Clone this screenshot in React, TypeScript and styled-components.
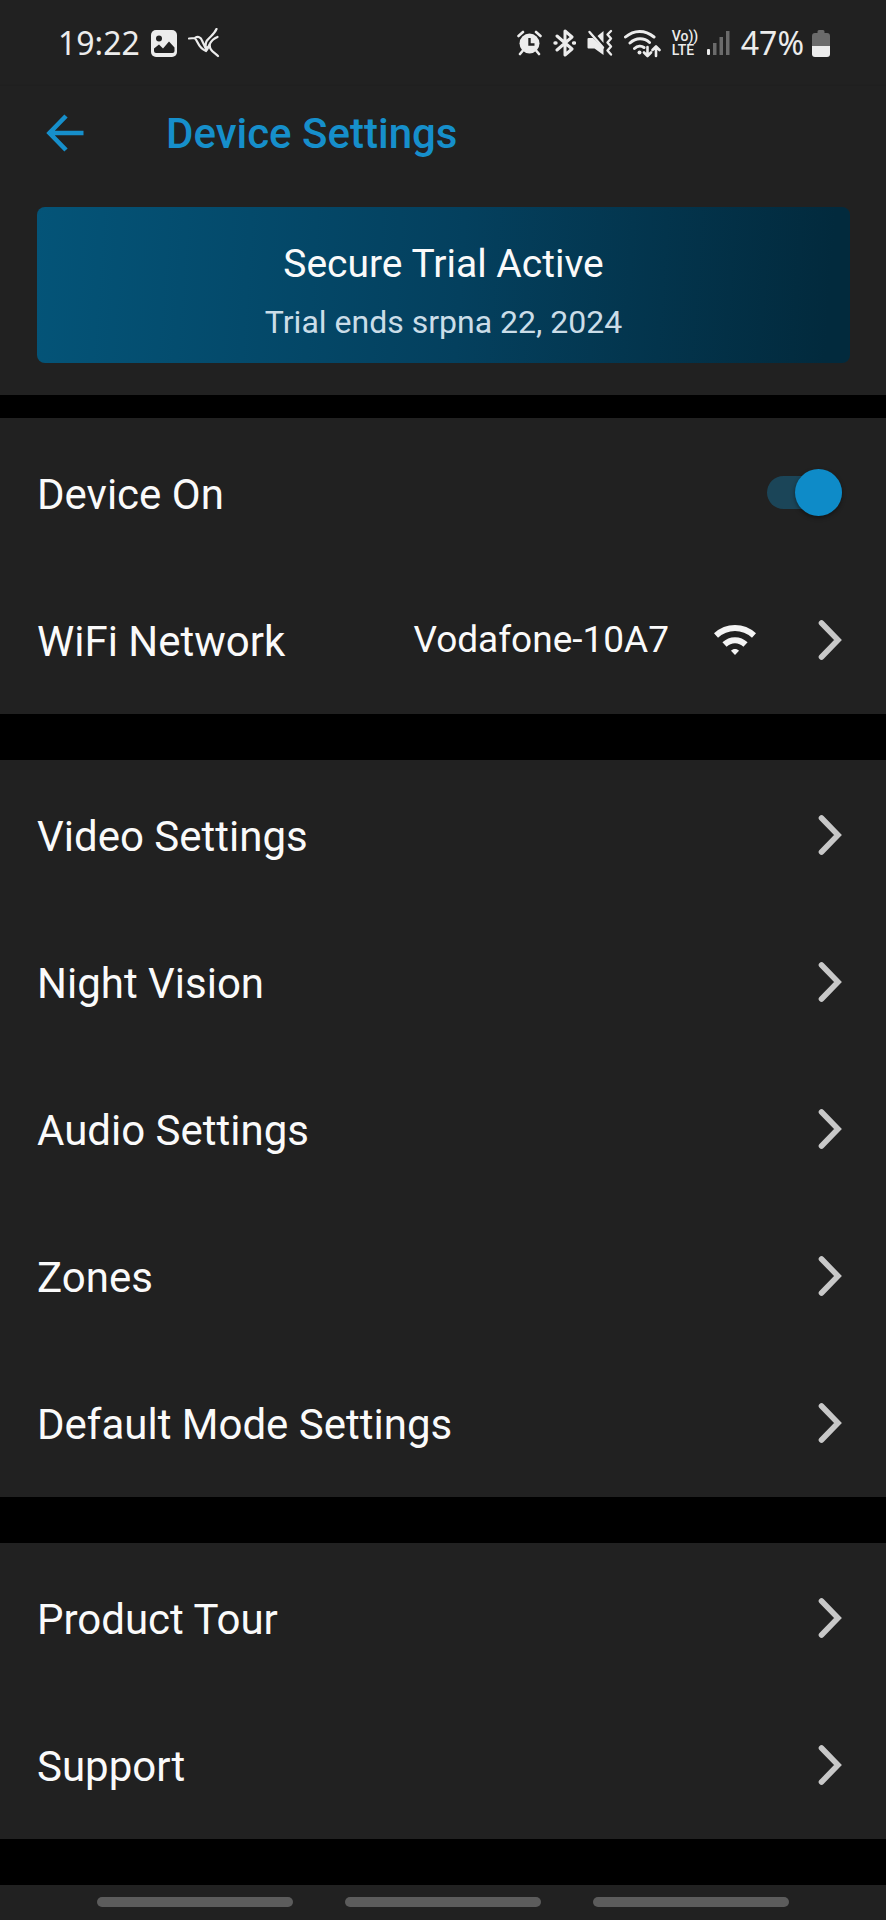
import { useState } from "react";
import styled, { createGlobalStyle } from "styled-components";

const GlobalStyle = createGlobalStyle`
  *, *::before { box-sizing: border-box; }
  body {
    margin: 0;
    background: #000;
    color: #fafafa;
    font-family: Roboto, "Noto Sans", sans-serif;
  }
  button { font: inherit; color: inherit; border: 0; padding: 0; background: none; cursor: pointer; }
  h1, h2, p { margin: 0; font-weight: 400; }
  svg { display: block; flex: none; }
`;

const Screen = styled.div`
  display: flex;
  flex-direction: column;
  min-height: 100vh;
`;

const StatusBar = styled.div`
  display: flex;
  align-items: center;
  justify-content: space-between;
  height: 86px;
  padding: 0 56px 0 58px;
  background: #212121;
  color: #ececec;
  font-family: "Noto Sans", sans-serif;
  font-size: 32px;
  line-height: 40px;
`;

const StatusGroup = styled.div<{ $gap: number }>`
  display: flex;
  align-items: center;
  gap: ${(p) => p.$gap}px;
`;

const Lte = styled.span`
  display: flex;
  flex-direction: column;
  width: 24px;
  font-family: Roboto, sans-serif;
  font-size: 14px;
  font-weight: 500;
  line-height: 14px;
`;

const Header = styled.header`
  display: flex;
  align-items: center;
  gap: 82px;
  height: 111px;
  padding: 0 36px 18px 46px;
  background: #212121;
  color: #168fcb;
  box-shadow: 0 1px 3px rgba(0, 0, 0, 0.3);
`;

const Title = styled.h1`
  padding-top: 3px;
  font-size: 42px;
  line-height: 50px;
  && { font-weight: 500; }
`;

const BannerArea = styled.section`
  padding: 10px 36px 32px 37px;
  background: #212121;
`;

const Banner = styled.div`
  display: flex;
  flex-direction: column;
  align-items: center;
  gap: 14px;
  padding: 33px 16px 21px;
  border-radius: 8px;
  background: linear-gradient(94deg, #045478 0%, #04405e 52%, #022a3d 97%);
  text-align: center;
`;

const BannerTitle = styled.h2`
  font-size: 39px;
  line-height: 48px;
`;

const BannerText = styled.p`
  font-size: 32px;
  line-height: 40px;
  color: #cbdde8;
`;

const Divider = styled.div<{ $small?: boolean }>`
  height: ${(p) => (p.$small ? 23 : 46)}px;
  background: #000;
`;

const Group = styled.section`
  display: flex;
  flex-direction: column;
  padding: 1px 0;
  background: #212121;
`;

const Row = styled.div`
  display: flex;
  align-items: center;
  width: 100%;
  height: 147px;
  padding: 0 44px 0 37px;
  font-size: 42px;
  line-height: 50px;
  text-align: left;
`;

const RowLabel = styled.span`
  flex: 1;
  padding-top: 4px;
`;

const RowValue = styled.span`
  display: flex;
  align-items: center;
  gap: 45px;
  margin-right: 62px;
  font-size: 37px;
  line-height: 44px;
`;

const Switch = styled.input`
  appearance: none;
  position: relative;
  width: 75px;
  height: 33px;
  margin: 0;
  border-radius: 17px;
  background: ${(p) => (p.checked ? "#1b4558" : "#4a4a4a")};
  cursor: pointer;

  &::before {
    content: "";
    position: absolute;
    top: -7px;
    ${(p) => (p.checked ? "right: 0;" : "left: 0;")}
    width: 47px;
    height: 47px;
    border-radius: 50%;
    background: ${(p) => (p.checked ? "#0e8bc8" : "#bdbdbd")};
    box-shadow: 0 2px 4px rgba(0, 0, 0, 0.4);
  }
`;

const NavBar = styled.nav`
  display: flex;
  justify-content: center;
  gap: 52px;
  flex: 1;
  min-height: 34px;
  padding: 12px 24px;
  background: #212121;
`;

const NavPill = styled.button`
  && { background: #5c5c5c; }
  width: 196px;
  height: 10px;
  border-radius: 5px;
`;

const Chevron = () => (
  <svg width="24" height="42" viewBox="0 0 24 42" fill="none" stroke="#c8c8c8" strokeWidth="5.600" strokeLinecap="round" aria-hidden="true">
    <path d="M3.500 4 20 21 3.500 38" />
  </svg>
);

const BackIcon = () => (
  <svg width="38" height="38" viewBox="0 0 38 38" fill="none" stroke="currentColor" strokeWidth="4.600" aria-hidden="true">
    <path d="M20 2 3.500 19 20 36M3.500 19H37.500" />
  </svg>
);

const WifiIcon = () => (
  <svg width="42" height="32" viewBox="0 0 42 32" fill="none" stroke="#f4f4f4" strokeWidth="6" aria-hidden="true">
    <path d="M2 11.500C13 1.500 29 1.500 40 11.500M10.500 20.500C16.500 14.700 25.500 14.700 31.500 20.500" />
    <path d="M21 31 17 26.800C19 24.500 23 24.500 25 26.800Z" fill="#f4f4f4" stroke="none" />
  </svg>
);

const PictureIcon = () => (
  <svg width="26" height="27" viewBox="0 0 26 27" aria-hidden="true">
    <rect width="26" height="27" rx="5" fill="#ececec" />
    <circle cx="8" cy="8.500" r="3" fill="#212121" />
    <path d="M3 18.500 8 14.500 12 18.500 18 11.500 23.500 17.500V21a2 2 0 0 1-2 2H5a2 2 0 0 1-2-2Z" fill="#212121" />
  </svg>
);

const BirdIcon = () => (
  <svg width="32" height="30" viewBox="0 0 32 30" fill="none" stroke="#ececec" strokeWidth="2.200" strokeLinejoin="round" strokeLinecap="round" aria-hidden="true">
    <path d="M1 10.500 7 10C10 8 13 9 14 12.500L17.500 20M7 10.500C10 13 10 20 18 23L18.500 19M28.500 1C26.500 6 22 8.500 19 12.500 17.500 14.500 17.500 17 17.500 20M29.500 9C26 10.500 23.500 12.500 22 15.500 20.500 18 20 21 18 23M22 15.500C20.500 22 26 24 30 28" />
  </svg>
);

const AlarmIcon = () => (
  <svg width="25" height="26" viewBox="0 0 25 26" fill="none" strokeLinecap="round" aria-hidden="true">
    <circle cx="12.500" cy="13.500" r="10" fill="#ececec" />
    <path d="M1.500 6 6 2M23.500 6 19 2M5.500 21 3 24M19.500 21 22 24" stroke="#ececec" strokeWidth="2.600" />
    <path d="M12.500 8V14.500H17.500" stroke="#212121" strokeWidth="2.400" strokeLinecap="butt" />
  </svg>
);

const BluetoothIcon = () => (
  <svg width="23" height="28" viewBox="0 0 23 28" fill="none" stroke="#ececec" strokeWidth="3" strokeLinejoin="round" strokeLinecap="round" aria-hidden="true">
    <path d="M4 7 19 20 12 26V2L19 8 4 21" />
    <path d="M2 14H3M20.500 14H21.500" strokeWidth="3.400" />
  </svg>
);

const MuteIcon = () => (
  <svg width="26" height="28" viewBox="0 0 26 28" aria-hidden="true">
    <path d="M1.500 9H6L16.500 19V26L7.500 19.500H1.500A1 1 0 0 1 .5 18.500V10A1 1 0 0 1 1.500 9ZM10.500 7 16.500 2V14Z" fill="#ececec" />
    <path d="M2.500 3 16 18.500" stroke="#ececec" strokeWidth="2.400" strokeLinecap="round" />
    <path d="M24 2 20.500 5.500 24 9.500 20.500 13.500 24 17.500 20.500 21.500 24 25.500" fill="none" stroke="#ececec" strokeWidth="2.400" strokeLinejoin="round" strokeLinecap="round" />
  </svg>
);

const WifiDataIcon = () => (
  <svg width="37" height="29" viewBox="0 0 37 29" fill="none" stroke="#ececec" strokeWidth="3" strokeLinecap="round" strokeLinejoin="round" aria-hidden="true">
    <path d="M1.500 8C10 .5 21 .5 30 8M6 14C12 8.500 20 8.500 25.500 13.500M10.500 19.500C13.500 16.700 17.500 16.700 20 18.500" />
    <circle cx="15.500" cy="23.500" r="2" fill="#ececec" stroke="none" />
    <path d="M23.500 18V26.500M20 23.500 23.500 27 27 23.500M32 27V17.500M28.500 21 32 17.500 35.500 21" strokeWidth="2.600" />
  </svg>
);

const SignalIcon = () => (
  <svg width="23" height="26" viewBox="0 0 23 26" aria-hidden="true">
    <rect y="19" width="3" height="6" rx="1" fill="#ececec" />
    <path d="M6 13H9.500V25H6ZM12.500 7H16V25H12.500ZM19 1H22.500V25H19Z" fill="#6b6b6b" />
  </svg>
);

const BatteryIcon = () => (
  <svg width="18" height="27" viewBox="0 0 18 27" aria-hidden="true">
    <path d="M5.500 3V1.500A1.500 1.500 0 0 1 7 0H11A1.500 1.500 0 0 1 12.500 1.500V3H15A3 3 0 0 1 18 6V16H0V6A3 3 0 0 1 3 3Z" fill="#6b6b6b" />
    <path d="M0 16H18V24A3 3 0 0 1 15 27H3A3 3 0 0 1 0 24Z" fill="#ececec" />
  </svg>
);

const LinkRow = ({ label }: { label: string }) => (
  <Row as="button">
    <RowLabel>{label}</RowLabel>
    <Chevron />
  </Row>
);

const deviceLinks = ["Video Settings", "Night Vision", "Audio Settings", "Zones", "Default Mode Settings"];
const helpLinks = ["Product Tour", "Support"];

export default function App() {
  const [deviceOn, setDeviceOn] = useState(true);

  return (
    <Screen>
      <GlobalStyle />
      <StatusBar>
        <StatusGroup $gap={11}>
          <span>19:22</span>
          <PictureIcon />
          <BirdIcon />
        </StatusGroup>
        <StatusGroup $gap={11}>
          <AlarmIcon />
          <BluetoothIcon />
          <MuteIcon />
          <WifiDataIcon />
          <Lte>
            <span>Vo))</span>
            <span>LTE</span>
          </Lte>
          <SignalIcon />
          <StatusGroup $gap={8}>
            <span>47%</span>
            <BatteryIcon />
          </StatusGroup>
        </StatusGroup>
      </StatusBar>
      <Header>
        <button aria-label="Back">
          <BackIcon />
        </button>
        <Title>Device Settings</Title>
      </Header>
      <main>
        <BannerArea>
          <Banner>
            <BannerTitle>Secure Trial Active</BannerTitle>
            <BannerText>Trial ends srpna 22, 2024</BannerText>
          </Banner>
        </BannerArea>
        <Divider $small />
        <Group>
          <Row as="label">
            <RowLabel>Device On</RowLabel>
            <Switch type="checkbox" role="switch" checked={deviceOn} onChange={(e) => setDeviceOn(e.target.checked)} />
          </Row>
          <Row as="button">
            <RowLabel>WiFi Network</RowLabel>
            <RowValue>
              Vodafone-10A7
              <WifiIcon />
            </RowValue>
            <Chevron />
          </Row>
        </Group>
        <Divider />
        <Group>
          {deviceLinks.map((label) => (
            <LinkRow key={label} label={label} />
          ))}
        </Group>
        <Divider />
        <Group>
          {helpLinks.map((label) => (
            <LinkRow key={label} label={label} />
          ))}
        </Group>
        <Divider />
      </main>
      <NavBar>
        <NavPill aria-label="Recent apps" />
        <NavPill aria-label="Home" />
        <NavPill aria-label="Go back" />
      </NavBar>
    </Screen>
  );
}
